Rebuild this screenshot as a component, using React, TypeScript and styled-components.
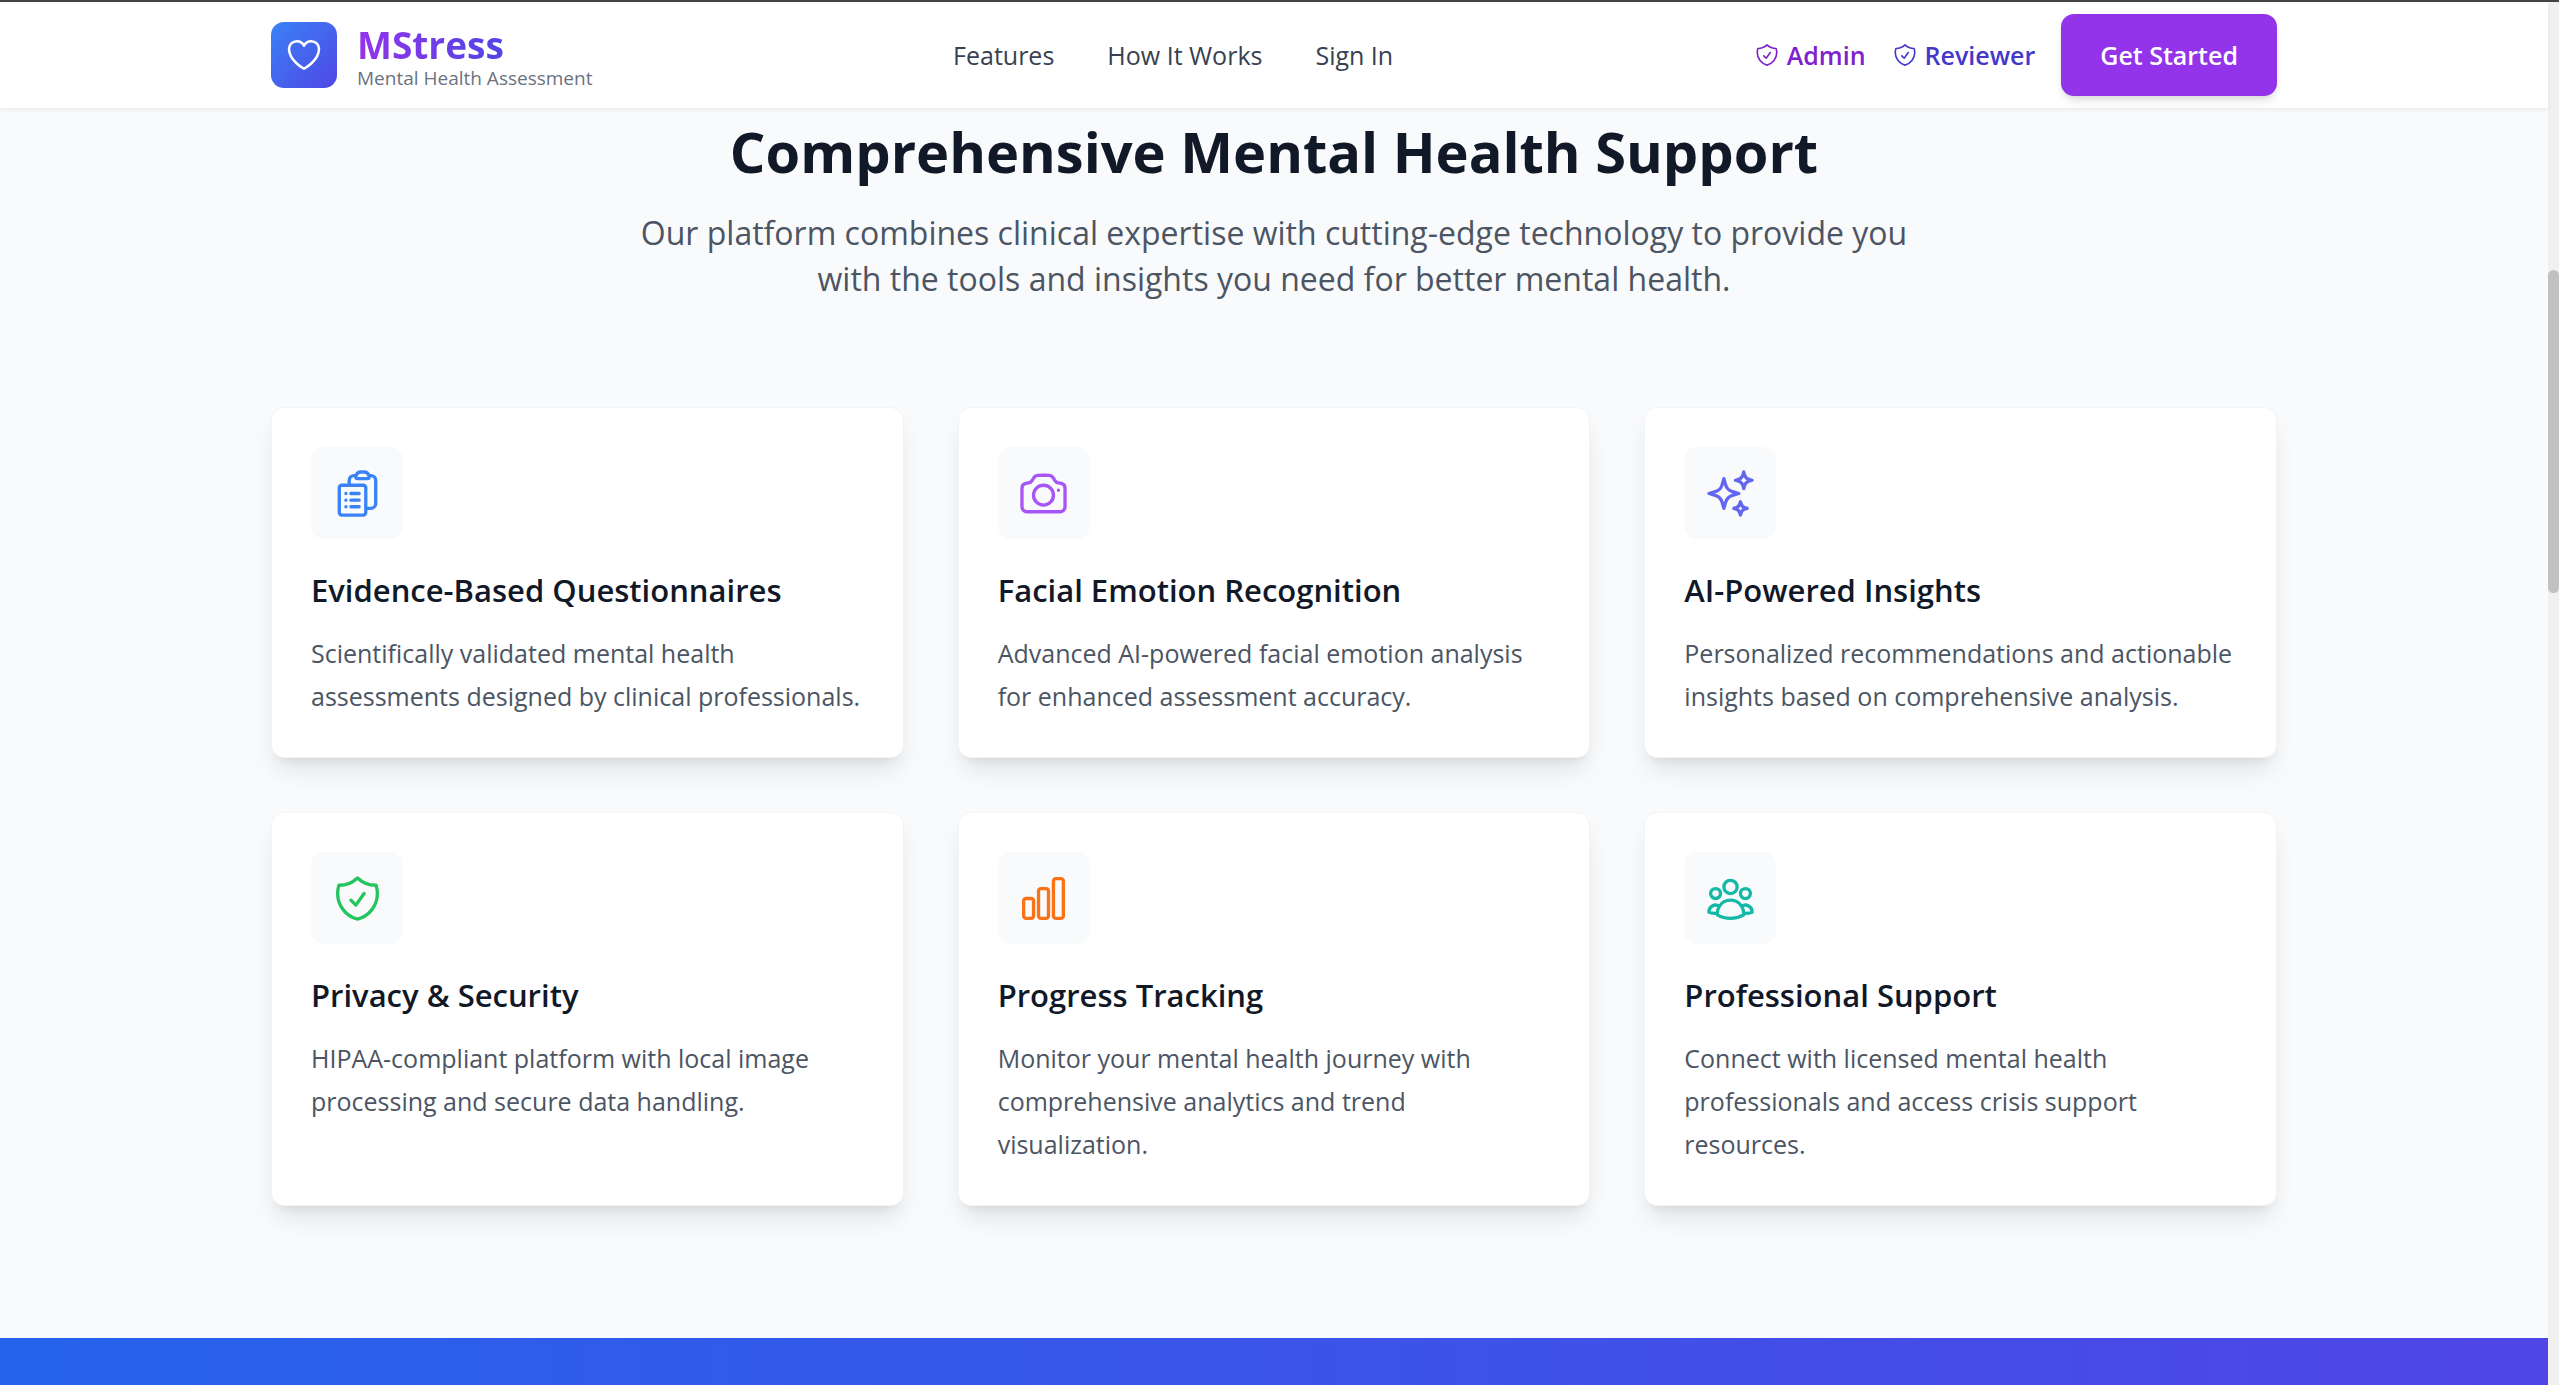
import React from 'react';
import styled, { createGlobalStyle } from 'styled-components';
import type { IconType } from 'react-icons';
import {
  HiOutlineCamera,
  HiOutlineChartBar,
  HiOutlineClipboardDocumentList,
  HiOutlineHeart,
  HiOutlineShieldCheck,
  HiOutlineSparkles,
  HiOutlineUserGroup,
} from 'react-icons/hi2';

const GlobalStyle = createGlobalStyle`
  *, *::before, *::after { box-sizing: border-box; }
  body {
    margin: 0;
    font-family: "Segoe UI", "Open Sans", "Noto Sans", sans-serif;
    font-size: 25px;
    color: #111827;
    background: #f9fafb;
  }
  h1, h2, h3, p { margin: 0; }
  a { color: inherit; text-decoration: none; }
`;

const Window = styled.div`
  display: flex;
  height: 100vh;
  overflow: hidden;
  border-top: 2px solid #444444;
`;

const Page = styled.div`
  flex: 1;
  min-width: 0;
  display: flex;
  flex-direction: column;
`;

const ScrollTrack = styled.div`
  flex: none;
  width: 11px;
  padding-top: 268px;
  background: #f0f0f0;
`;

const ScrollThumb = styled.div`
  height: 323px;
  border-radius: 6px;
  background: #c1c1c1;
`;

const Container = styled.div`
  width: 100%;
  max-width: 2112px;
  margin: 0 auto;
  padding: 0 53px;
`;

const Header = styled.header`
  position: relative;
  z-index: 1;
  background: #ffffff;
  box-shadow: 0 2px 4px rgba(0, 0, 0, 0.06);
`;

const HeaderRow = styled(Container)`
  display: flex;
  align-items: center;
  justify-content: space-between;
  height: 106px;
`;

const Brand = styled.a`
  display: flex;
  align-items: center;
  gap: 20px;
`;

const LogoTile = styled.span`
  display: grid;
  place-items: center;
  width: 66px;
  height: 66px;
  border-radius: 13px;
  color: #ffffff;
  background: linear-gradient(to bottom right, #3b82f6, #4f46e5);
`;

const BrandText = styled.span`
  display: flex;
  flex-direction: column;
  align-items: flex-start;
`;

const BrandName = styled.span`
  font-size: 37px;
  line-height: 46px;
  font-weight: 700;
  color: transparent;
  background: linear-gradient(to right, #9333ea, #4f46e5);
  background-clip: text;
  -webkit-background-clip: text;
`;

const BrandTagline = styled.span`
  font-size: 19px;
  line-height: 20px;
  color: #6b7280;
`;

const Nav = styled.nav`
  display: flex;
  gap: 53px;
  color: #374151;
`;

const Actions = styled.div`
  display: flex;
  align-items: center;
  gap: 26px;
`;

const RoleLink = styled.a<{ $color: string }>`
  display: flex;
  align-items: center;
  gap: 7px;
  font-weight: 600;
  color: ${(p) => p.$color};
`;

const PrimaryButton = styled.button`
  height: 82px;
  padding: 0 39px;
  border: 0;
  border-radius: 13px;
  font: inherit;
  font-weight: 600;
  color: #ffffff;
  background: #9333ea;
  box-shadow: 0 7px 10px -2px rgba(0, 0, 0, 0.1), 0 3px 7px -3px rgba(0, 0, 0, 0.1);
  cursor: pointer;
`;

const Features = styled.section`
  padding: 10px 0 132px;
`;

const Intro = styled.div`
  display: flex;
  flex-direction: column;
  align-items: center;
  gap: 26px;
  margin-bottom: 105px;
  text-align: center;
`;

const SectionTitle = styled.h2`
  font-size: 56px;
  line-height: 66px;
  font-weight: 700;
`;

const Lead = styled.p`
  max-width: 1267px;
  font-size: 32px;
  line-height: 46px;
  color: #4b5563;
`;

const CardGrid = styled.div`
  display: grid;
  grid-template-columns: repeat(3, 1fr);
  gap: 54px;
`;

const Card = styled.article`
  padding: 39px;
  border: 1px solid #f3f4f6;
  border-radius: 13px;
  background: #ffffff;
  box-shadow: 0 16px 25px -5px rgba(0, 0, 0, 0.1), 0 7px 10px -7px rgba(0, 0, 0, 0.1);
`;

const IconTile = styled.div<{ $color: string }>`
  display: grid;
  place-items: center;
  width: 92px;
  height: 92px;
  margin-bottom: 28px;
  border-radius: 13px;
  color: ${(p) => p.$color};
  background: #f9fafb;
`;

const CardTitle = styled.h3`
  margin-bottom: 19px;
  font-size: 31px;
  line-height: 46px;
  font-weight: 600;
`;

const CardText = styled.p`
  line-height: 43px;
  color: #4b5563;
`;

const Band = styled.section`
  flex: 1;
  background: linear-gradient(to right, #2563eb, #4f46e5);
`;

interface Feature {
  icon: IconType;
  color: string;
  title: string;
  text: string;
}

const features: Feature[] = [
  {
    icon: HiOutlineClipboardDocumentList,
    color: '#3b82f6',
    title: 'Evidence-Based Questionnaires',
    text: 'Scientifically validated mental health assessments designed by clinical professionals.',
  },
  {
    icon: HiOutlineCamera,
    color: '#a855f7',
    title: 'Facial Emotion Recognition',
    text: 'Advanced AI-powered facial emotion analysis for enhanced assessment accuracy.',
  },
  {
    icon: HiOutlineSparkles,
    color: '#6366f1',
    title: 'AI-Powered Insights',
    text: 'Personalized recommendations and actionable insights based on comprehensive analysis.',
  },
  {
    icon: HiOutlineShieldCheck,
    color: '#22c55e',
    title: 'Privacy & Security',
    text: 'HIPAA-compliant platform with local image processing and secure data handling.',
  },
  {
    icon: HiOutlineChartBar,
    color: '#f97316',
    title: 'Progress Tracking',
    text: 'Monitor your mental health journey with comprehensive analytics and trend visualization.',
  },
  {
    icon: HiOutlineUserGroup,
    color: '#14b8a6',
    title: 'Professional Support',
    text: 'Connect with licensed mental health professionals and access crisis support resources.',
  },
];

export default function App() {
  return (
    <>
      <GlobalStyle />
      <Window>
        <Page>
          <Header>
            <HeaderRow>
              <Brand href="#home">
                <LogoTile>
                  <HiOutlineHeart size={40} />
                </LogoTile>
                <BrandText>
                  <BrandName>MStress</BrandName>
                  <BrandTagline>Mental Health Assessment</BrandTagline>
                </BrandText>
              </Brand>
              <Nav>
                <a href="#features">Features</a>
                <a href="#how-it-works">How It Works</a>
                <a href="#sign-in">Sign In</a>
              </Nav>
              <Actions>
                <RoleLink href="#admin" $color="#7e22ce">
                  <HiOutlineShieldCheck size={26} />
                  Admin
                </RoleLink>
                <RoleLink href="#reviewer" $color="#4338ca">
                  <HiOutlineShieldCheck size={26} />
                  Reviewer
                </RoleLink>
                <PrimaryButton type="button">Get Started</PrimaryButton>
              </Actions>
            </HeaderRow>
          </Header>
          <main>
            <Features id="features">
              <Container>
                <Intro>
                  <SectionTitle>Comprehensive Mental Health Support</SectionTitle>
                  <Lead>
                    Our platform combines clinical expertise with cutting-edge technology to provide
                    you with the tools and insights you need for better mental health.
                  </Lead>
                </Intro>
                <CardGrid>
                  {features.map(({ icon: Icon, color, title, text }) => (
                    <Card key={title}>
                      <IconTile $color={color}>
                        <Icon size={53} />
                      </IconTile>
                      <CardTitle>{title}</CardTitle>
                      <CardText>{text}</CardText>
                    </Card>
                  ))}
                </CardGrid>
              </Container>
            </Features>
          </main>
          <Band />
        </Page>
        <ScrollTrack>
          <ScrollThumb />
        </ScrollTrack>
      </Window>
    </>
  );
}
